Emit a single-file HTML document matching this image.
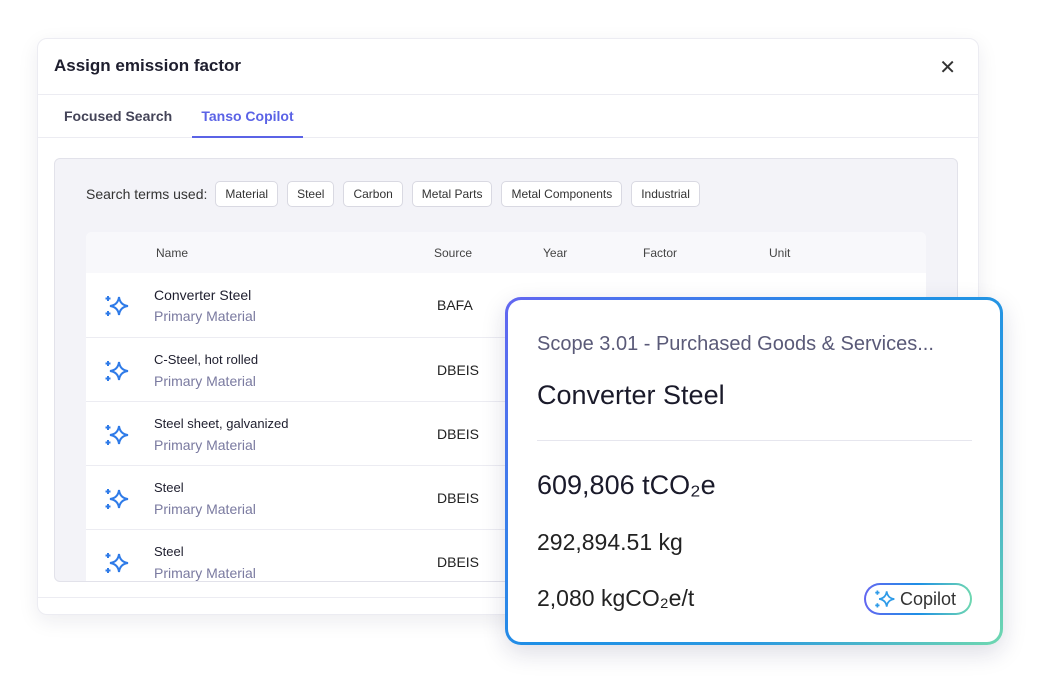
<!DOCTYPE html>
<html><head><style>
*{box-sizing:border-box;margin:0;padding:0}
body{width:1040px;height:690px;background:#fff;font-family:"Liberation Sans",sans-serif;position:relative;overflow:hidden;color:#1e1e2e}
.dlg{position:absolute;left:37px;top:38px;width:942px;height:577px;background:#fff;border:1px solid #ececf2;border-radius:10px;box-shadow:0 6px 20px rgba(30,30,60,.08)}
.hdr{height:56px;border-bottom:1px solid #ececf2;padding:17px 16px;font-size:17px;font-weight:bold;color:#1e1e2e}
.x{position:absolute;right:22px;top:16px;font-size:20px;color:#333}
.tabs{height:43px;border-bottom:1px solid #ececf2;position:relative;font-size:14px;font-weight:bold}
.t1{position:absolute;left:26px;top:13px;color:#444458}
.t2{position:absolute;left:154px;top:0;width:111px;height:43px;border-bottom:2px solid #5b63e6;color:#5b63e6;text-align:center;padding-top:13px}
.panel{position:absolute;left:16px;top:119px;width:904px;height:424px;background:#f3f3f8;border:1px solid #e2e2ea;border-radius:6px;overflow:hidden}
.st{position:absolute;left:31px;top:22px;font-size:14px;color:#333;display:flex;align-items:center;gap:8px}
.chip{border:1px solid #d9d9e2;background:#fff;border-radius:5px;padding:5px 8px;font-size:12px;color:#333;margin-right:1px}
.chip{padding:5px 9px}
.tbl{position:absolute;left:31px;top:73px;width:840px;height:360px;background:#fff;border-radius:6px;overflow:hidden}
.th{height:41px;background:#f8f8fb;position:relative;font-size:12px;color:#444}
.th span,.row span{position:absolute}
.row{height:64px;border-top:1px solid #ececf2;position:relative}
.nm{left:68px;top:14px;font-size:14px;color:#1e1e2e}
.sub{left:68px;top:35px;font-size:14px;color:#7a7aa0}
.src{left:351px;top:24px;font-size:14px;color:#222}
.ic{position:absolute;left:18px;top:20px}
.card{position:absolute;left:505px;top:297px;width:498px;height:348px;border:3px solid transparent;border-radius:16px;background:linear-gradient(#fff,#fff) padding-box,linear-gradient(135deg,#6366f1 0%,#1d8fe6 45%,#2a98e0 70%,#6fd8b0 100%) border-box;box-shadow:0 8px 24px rgba(30,30,80,.15)}
.card div{position:absolute;left:29px}
.pill{position:absolute;left:356px;top:283px;width:108px;height:32px;border-radius:16px;border:2px solid transparent;background:linear-gradient(#fff,#fff) padding-box,linear-gradient(90deg,#6366f1,#1d8fe6,#6fd8b0) border-box;font-size:18px;color:#333;display:flex;align-items:center;padding-left:8px;gap:4px}
</style></head><body>
<div class="dlg">
<div class="hdr">Assign emission factor</div>
<div class="x">✕</div>
<div class="tabs"><div class="t1">Focused Search</div><div class="t2">Tanso Copilot</div></div>
<div class="panel">
<div class="st">Search terms used: <span class="chip">Material</span><span class="chip">Steel</span><span class="chip">Carbon</span><span class="chip">Metal Parts</span><span class="chip">Metal Components</span><span class="chip">Industrial</span></div>
<div class="tbl">
<div class="th"><span style="left:70px;top:14px">Name</span><span style="left:348px;top:14px">Source</span><span style="left:457px;top:14px">Year</span><span style="left:557px;top:14px">Factor</span><span style="left:683px;top:14px">Unit</span></div>
<div class="row" style="border-top:none"><svg class="ic" width="26" height="26" viewBox="0 0 26 26"><path d="M15 4 Q16 12 24 13 Q16 14 15 22 Q14 14 6 13 Q14 12 15 4Z" fill="none" stroke="#2f7be8" stroke-width="2"/><path d="M4 3v5M1.5 5.5h5M4 18v5M1.5 20.5h5" stroke="#2f7be8" stroke-width="2"/></svg><span class="nm">Converter Steel</span><span class="sub">Primary Material</span><span class="src">BAFA</span></div>
<div class="row"><svg class="ic" width="26" height="26" viewBox="0 0 26 26"><path d="M15 4 Q16 12 24 13 Q16 14 15 22 Q14 14 6 13 Q14 12 15 4Z" fill="none" stroke="#2f7be8" stroke-width="2"/><path d="M4 3v5M1.5 5.5h5M4 18v5M1.5 20.5h5" stroke="#2f7be8" stroke-width="2"/></svg><span class="nm" style="font-size:13px">C-Steel, hot rolled</span><span class="sub">Primary Material</span><span class="src">DBEIS</span></div>
<div class="row"><svg class="ic" width="26" height="26" viewBox="0 0 26 26"><path d="M15 4 Q16 12 24 13 Q16 14 15 22 Q14 14 6 13 Q14 12 15 4Z" fill="none" stroke="#2f7be8" stroke-width="2"/><path d="M4 3v5M1.5 5.5h5M4 18v5M1.5 20.5h5" stroke="#2f7be8" stroke-width="2"/></svg><span class="nm" style="font-size:13px">Steel sheet, galvanized</span><span class="sub">Primary Material</span><span class="src">DBEIS</span></div>
<div class="row"><svg class="ic" width="26" height="26" viewBox="0 0 26 26"><path d="M15 4 Q16 12 24 13 Q16 14 15 22 Q14 14 6 13 Q14 12 15 4Z" fill="none" stroke="#2f7be8" stroke-width="2"/><path d="M4 3v5M1.5 5.5h5M4 18v5M1.5 20.5h5" stroke="#2f7be8" stroke-width="2"/></svg><span class="nm" style="font-size:13px">Steel</span><span class="sub">Primary Material</span><span class="src">DBEIS</span></div>
<div class="row"><svg class="ic" width="26" height="26" viewBox="0 0 26 26"><path d="M15 4 Q16 12 24 13 Q16 14 15 22 Q14 14 6 13 Q14 12 15 4Z" fill="none" stroke="#2f7be8" stroke-width="2"/><path d="M4 3v5M1.5 5.5h5M4 18v5M1.5 20.5h5" stroke="#2f7be8" stroke-width="2"/></svg><span class="nm" style="font-size:13px">Steel</span><span class="sub">Primary Material</span><span class="src">DBEIS</span></div>
</div></div>
<div style="position:absolute;left:0;right:0;top:558px;border-top:1px solid #ececf2"></div>
</div>
<div class="card">
<div style="top:33px;font-size:20px;color:#5a5a78">Scope 3.01 - Purchased Goods &amp; Services...</div>
<div style="top:80px;font-size:27px;color:#1a1a2a">Converter Steel</div>
<div style="top:140px;width:435px;border-top:1px solid #e6e6ee"></div>
<div style="top:170px;font-size:27px;color:#1a1a2a">609,806 tCO₂e</div>
<div style="top:229px;font-size:23px;color:#222">292,894.51 kg</div>
<div style="top:285px;font-size:23px;color:#222">2,080 kgCO₂e/t</div>
<span class="pill"><svg width="22" height="22" viewBox="0 0 26 26"><path d="M15 4 Q16 12 24 13 Q16 14 15 22 Q14 14 6 13 Q14 12 15 4Z" fill="none" stroke="#2f9be8" stroke-width="2"/><path d="M4 3v5M1.5 5.5h5M4 18v5M1.5 20.5h5" stroke="#2f9be8" stroke-width="2"/></svg>Copilot</span>
</div>
</body></html>
